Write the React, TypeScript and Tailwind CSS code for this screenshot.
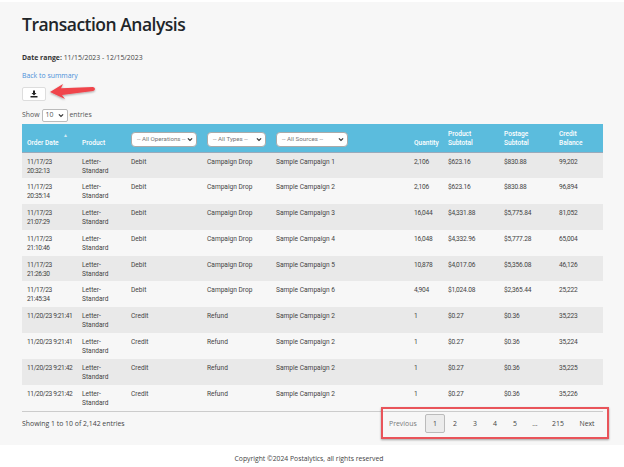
import React from "react";

const rows = [
  ["11/17/23 20:32:13", "Debit", "Campaign Drop", "Sample Campaign 1", "2,106", "$623.16", "$830.88", "99,202"],
  ["11/17/23 20:35:14", "Debit", "Campaign Drop", "Sample Campaign 2", "2,106", "$623.16", "$830.88", "96,894"],
  ["11/17/23 21:07:29", "Debit", "Campaign Drop", "Sample Campaign 3", "16,044", "$4,331.88", "$5,775.84", "81,052"],
  ["11/17/23 21:10:46", "Debit", "Campaign Drop", "Sample Campaign 4", "16,048", "$4,332.96", "$5,777.28", "65,004"],
  ["11/17/23 21:26:30", "Debit", "Campaign Drop", "Sample Campaign 5", "10,878", "$4,017.06", "$5,356.08", "46,126"],
  ["11/17/23 21:45:34", "Debit", "Campaign Drop", "Sample Campaign 6", "4,904", "$1,024.08", "$2,365.44", "25,222"],
  ["11/20/23 9:21:41", "Credit", "Refund", "Sample Campaign 2", "1", "$0.27", "$0.36", "35,223"],
  ["11/20/23 9:21:41", "Credit", "Refund", "Sample Campaign 2", "1", "$0.27", "$0.36", "35,224"],
  ["11/20/23 9:21:42", "Credit", "Refund", "Sample Campaign 2", "1", "$0.27", "$0.36", "35,225"],
  ["11/20/23 9:21:42", "Credit", "Refund", "Sample Campaign 2", "1", "$0.27", "$0.36", "35,226"],
];

function FilterSelect({ label, width }: { label: string; width: string }) {
  return (
    <div className={`${width} h-[15px] bg-white border border-[#aaa] rounded-[4px] flex items-center justify-between pl-[5px] pr-[3px] text-[6.2px] font-normal text-[#777]`}>
      <span className="whitespace-nowrap">{label}</span>
      <svg width="6" height="5" viewBox="0 0 10 8"><path d="M1.5 2l3.5 3.5L8.5 2" fill="none" stroke="#333" strokeWidth="2" /></svg>
    </div>
  );
}

export default function App() {
  const pages = ["2", "3", "4", "5", "…"];
  return (
    <div className="relative w-[624px] h-[467px] overflow-hidden bg-white text-[#212529] font-['Open_Sans',sans-serif]">
      <main className="h-[443px] bg-[#f7f7f7] mt-[2px] px-[22px] pt-[11px]">
        <h1 className="text-[17.5px] leading-[22px] font-semibold tracking-[-0.5px] text-[#212529]">Transaction Analysis</h1>
        <p className="mt-[17px] text-[6.9px] leading-[11px] text-[#444]"><b className="text-[#333]">Date range:</b> 11/15/2023 - 12/15/2023</p>
        <a className="block mt-[7px] text-[6.9px] leading-[11px] text-[#4a90d9]">Back to summary</a>
        <button className="mt-[6px] w-[24px] h-[14px] bg-white border border-[#ddd] rounded-[2px] flex items-center justify-center">
          <svg width="8" height="8" viewBox="0 0 16 16" fill="#222">
            <path d="M6 1h4v5h3l-5 5-5-5h3z" />
            <path d="M1 12h14v3H1z" />
          </svg>
        </button>
        <div className="mt-[7px] h-[14px] flex items-center gap-[2px] text-[6.9px] text-[#555]">
          <span>Show</span>
          <div className="w-[26px] h-[13px] bg-white border border-[#bbb] rounded-[2px] flex items-center justify-between px-[3px]">
            <span>10</span>
            <svg width="6" height="5" viewBox="0 0 10 8"><path d="M1.5 2l3.5 3.5L8.5 2" fill="none" stroke="#333" strokeWidth="2" /></svg>
          </div>
          <span>entries</span>
        </div>
        <table className="mt-[2px] w-[581px] table-fixed border-collapse font-['Roboto',sans-serif] text-[6.6px] leading-[9px] text-[#444]">
          <colgroup>
            <col className="w-[55px]" /><col className="w-[54px]" /><col className="w-[76px]" /><col className="w-[69px]" />
            <col className="w-[138px]" /><col className="w-[34px]" /><col className="w-[56px]" /><col className="w-[55px]" /><col />
          </colgroup>
          <thead>
            <tr className="h-[28px] bg-[#5bbcdd] text-white text-[6.6px] border-b border-[#9ab]">
              <th className="relative px-[5px] pb-[4px] align-bottom text-left font-medium">
                Order Date
                <span className="absolute right-[9px] top-[9px] text-[5px] leading-[5px] text-[#cfe9f3]">▲</span>
              </th>
              <th className="px-[5px] pb-[4px] align-bottom text-left font-medium">Product</th>
              <th className="pr-[5px] pt-[4px] align-middle text-left"><FilterSelect label="-- All Operations --" width="w-[66px]" /></th>
              <th className="pr-[5px] pt-[4px] align-middle text-left"><FilterSelect label="-- All Types --" width="w-[59px]" /></th>
              <th className="pr-[5px] pt-[4px] align-middle text-left"><FilterSelect label="-- All Sources --" width="w-[72px]" /></th>
              <th className="pb-[4px] align-bottom text-left font-medium whitespace-nowrap">Quantity</th>
              <th className="pb-[4px] align-bottom text-left font-medium">Product<br />Subtotal</th>
              <th className="pb-[4px] align-bottom text-left font-medium">Postage<br />Subtotal</th>
              <th className="pb-[4px] align-bottom text-left font-medium">Credit<br />Balance</th>
            </tr>
          </thead>
          <tbody>
            {rows.map((r, i) => (
              <tr key={i} className={`h-[25.9px] align-top ${i % 2 === 0 ? "bg-[#e9e9e9]" : "bg-[#f7f7f7]"}`}>
                <td className={`px-[5px] pt-[5px] tracking-[-0.35px] ${i >= 6 ? "whitespace-nowrap" : ""}`}>{r[0]}</td>
                <td className="px-[5px] pt-[5px]">Letter-<br />Standard</td>
                <td className="pt-[5px]">{r[1]}</td>
                <td className="pt-[5px]">{r[2]}</td>
                <td className="pt-[5px]">{r[3]}</td>
                <td className="pt-[5px] tracking-[-0.2px]">{r[4]}</td>
                <td className="pt-[5px] tracking-[-0.2px]">{r[5]}</td>
                <td className="pt-[5px] tracking-[-0.2px]">{r[6]}</td>
                <td className="pt-[5px] tracking-[-0.2px]">{r[7]}</td>
              </tr>
            ))}
          </tbody>
        </table>
        <div className="w-[581px] border-t border-[#ccc] flex items-start justify-between">
          <span className="mt-[6px] text-[6.9px] leading-[11px] text-[#444]">Showing 1 to 10 of 2,142 entries</span>
          <div className="mt-[2px] flex items-center text-[6.9px] text-[#444] h-[20px]">
            <span className="text-[#777] w-[43px] pl-[7px]">Previous</span>
            <span className="w-[20px] h-[19px] flex items-center justify-center bg-[#ececec] border border-[#bbb] rounded-[2px]">1</span>
            {pages.map((p) => (
              <span key={p} className="w-[20px] h-[19px] flex items-center justify-center">{p}</span>
            ))}
            <span className="w-[26px] h-[19px] flex items-center justify-center">215</span>
            <span className="w-[32px] h-[19px] flex items-center justify-center">Next</span>
          </div>
        </div>
      </main>
      <footer className="h-[22px] pt-[9px] pr-[6px] text-center text-[6.8px] leading-[10px] text-[#444]">Copyright ©2024 Postalytics, all rights reserved</footer>

      <svg className="absolute left-[48px] top-[82px]" width="50" height="20" viewBox="0 0 50 20">
        <defs><filter id="s" x="-20%" y="-20%" width="140%" height="160%"><feDropShadow dx="0" dy="1" stdDeviation="1" floodOpacity="0.35" /></filter></defs>
        <path d="M2 10L15 2l-2 4.2 32-1.2q2 .3 2 2t-2 2L14 13l3 4z" fill="#f0444c" filter="url(#s)" />
      </svg>
      <div className="absolute left-[381px] top-[407px] w-[228px] h-[32px] border-2 border-[#e9545a] shadow-[0_1px_2px_rgba(0,0,0,0.35)]" />
    </div>
  );
}
